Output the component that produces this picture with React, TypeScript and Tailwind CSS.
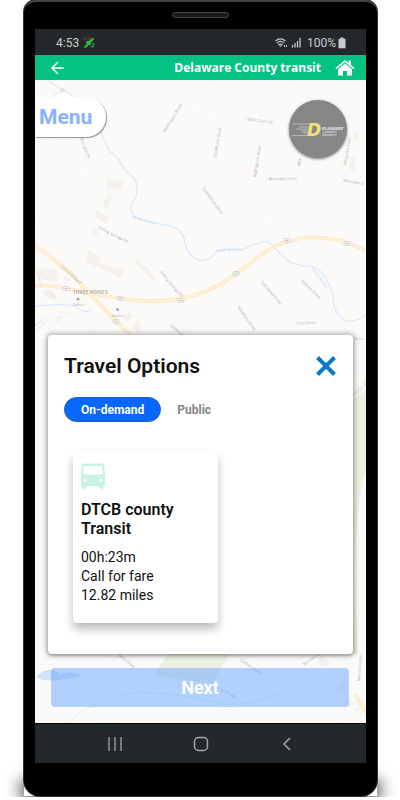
import { useState } from 'react';

const trips = [
  { id: 'dtcb', name: 'DTCB county Transit', duration: '00h:23m', fare: 'Call for fare', distance: '12.82 miles' },
];

const tabs = ['On-demand', 'Public'];

const roads = [
  'M35 80 Q47 85 55 97 M35 140 Q60 133 82 138 L92 172 Q104 195 98 207 L88 224',
  'M126 80 L208 194 L222 213 Q230 220 260 219 Q282 222 288 240',
  'M137 93 L173 80 M182 80 L180 109 L200 112 L275 124 L290 127',
  'M226 80 L212 180 M268 80 L250 180 M311 80 L296 180 L287 238',
  'M344 80 L353 110 L340 180 L334 238 M353 110 L366 110',
  'M200 179 L366 181 M93 174 Q58 180 45 197 Q40 206 43 211',
  'M35 208 L89 224 L122 238 Q140 247 150 263 L180 294 M40 211 L35 230',
  'M318 237 L317 218 Q313 211 317 209 Q322 213 317 218',
  'M251 264 L260 279 L298 334 M260 279 Q274 270 300 281 Q318 290 318 303 L318 322 L333 334',
  'M223 285 L257 334 M157 305 Q165 320 190 336',
  'M35 329 Q60 306 84 318 L93 334 M52 334 L62 319 M93 328 L112 311',
  'M35 345 L48 357 M353 370 L366 361 M353 392 Q361 382 365 388 Q364 394 353 398',
  'M35 708 Q46 706 55 693 Q78 696 90 682 L120 657 L155 676 Q205 691 237 717',
  'M232 655 L251 675 Q271 687 276 678 L292 655 M328 655 L352 690 L357 724',
  'M366 655 L355 700 M94 724 Q100 714 112 724 M337 724 L366 708',
];

const buildings = [
  '107,181 122,182 121,189 107,188',
  '108,195 112,197 107,208 103,206',
  '97,211 109,218 106,223 95,218',
  '93,230 98,231 97,235 93,234',
  '89,252 101,258 99,264 124,271 121,278 86,262',
  '138,260 155,277 154,281 136,263',
  '38,269 57,271 57,281 45,280 38,277',
  '65,277 70,279 69,281 63,280',
  '44,291 54,292 57,300 46,297',
  '56,320 60,311 64,314 59,325',
  '124,319 129,313 132,317 127,322',
  '133,327 137,322 142,326 137,332',
  '35,325 43,319 45,323 38,331',
  '354,132 358,134 357,142 353,140',
  '350,158 355,156 354,171 349,169',
  '320,657 330,663 326,667 318,663',
  '337,688 343,683 346,688 340,693',
  '345,702 350,698 354,704 349,708',
  '354,711 358,708 361,712 357,716',
];

const labels = [
  { text: 'Bennington Road', x: 165, y: 133, angle: -58 },
  { text: 'Belle Claire Dr.', x: 247, y: 121, angle: 7 },
  { text: 'Hazelhurst Road', x: 216, y: 159, angle: -80 },
  { text: 'Bellingham Road', x: 256, y: 178, angle: -81 },
  { text: 'Margrave Road', x: 346, y: 166, angle: -80 },
  { text: 'Albe', x: 300, y: 167, angle: -80 },
  { text: 'Avondale Drive', x: 269, y: 180, angle: 0 },
  { text: 'Avondale D', x: 343, y: 182, angle: 10 },
  { text: 'Summerset Drive', x: 202, y: 189, angle: 54 },
  { text: 'Bincaple Dr', x: 80, y: 139, angle: 68 },
  { text: 'Falling Springs Rd.', x: 98, y: 229, angle: 26 },
  { text: 'Falling Springs Rd.', x: 160, y: 273, angle: 50 },
  { text: 'Concord Road', x: 60, y: 267, angle: 42 },
  { text: 'Eastwood Drive', x: 261, y: 283, angle: 50 },
  { text: 'Keenan Drive', x: 301, y: 282, angle: 44 },
  { text: 'Westbury Drive', x: 237, y: 308, angle: 54 },
  { text: 'Cass Drive', x: 296, y: 325, angle: -2 },
  { text: 'Edna’s', x: 73, y: 306, angle: 0 },
  { text: 'Bush’s', x: 112, y: 317, angle: 0 },
  { text: 'Millwood', x: 170, y: 327, angle: 38 },
  { text: 'Drive', x: 354, y: 340, angle: 0 },
  { text: 'Bella Drive', x: 118, y: 656, angle: 40 },
  { text: 'Colleen Street', x: 240, y: 661, angle: 36 },
  { text: 'Bernard Ct', x: 304, y: 666, angle: -34 },
  { text: 'Bernard Street', x: 360, y: 682, angle: -86 },
  { text: 'Grant Street', x: 216, y: 688, angle: 30 },
];

const shields = [
  { x: 66, y: 289 },
  { x: 120, y: 299 },
  { x: 181, y: 301 },
  { x: 116, y: 322 },
  { x: 236, y: 274 },
  { x: 287, y: 241 },
  { x: 347, y: 244 },
];

function MapBackground() {
  return (
    <svg
      className="absolute inset-0 h-full w-full"
      viewBox="35 80 331 644"
      preserveAspectRatio="xMidYMid slice"
      aria-hidden="true"
    >
      <rect x="35" y="80" width="331" height="644" fill="#fbfaf9" />
      <path d="M168 654 H230 L212 684 L153 676 Z M366 378 L353 394 V655 H358 Q350 520 366 470 Z" fill="#eaf1e0" />
      <path d="M36 677 Q42 670 54 670 L60 675 Q70 670 82 676 Q64 681 48 681 Q40 681 36 677Z" fill="#cfe3f8" />
      {buildings.map((points) => (
        <polygon key={points} points={points} fill="#f5f2ee" stroke="#f0ece7" strokeWidth="0.5" />
      ))}
      <g fill="none" strokeLinecap="round" strokeLinejoin="round">
        {roads.map((d) => (
          <path key={d} d={d} stroke="#efeeed" strokeWidth="2.2" />
        ))}
        {roads.map((d) => (
          <path key={d} d={d} stroke="#fff" strokeWidth="1.4" />
        ))}
        <path d="M67 724 Q100 693 145 693 Q190 695 225 705 Q285 705 325 664" stroke="#e7e6e5" strokeWidth="0.8" />
        <path d="M37 271 L41 286 M50 293 L56 300 M50 299 L52 294" stroke="#dcd8d8" strokeWidth="0.8" strokeDasharray="2 1" />
        <g stroke="#d8e9fa" strokeWidth="1.2">
          <path d="M46 80 L62 90 L68 100 M98 127 Q105 144 111 153 Q119 158 123 168 L135 180 Q140 191 134 201 Q127 207 135 217 Q145 223 163 225 Q184 227 185 244 Q188 257 200 261 Q210 262 216 252 Q225 248 240 251 L262 242 Q271 241 277 251 L290 263 Q302 267 312 267 Q325 270 333 296 Q333 313 344 321 Q355 324 366 315" />
          <path d="M35 307 Q60 303 77 307 Q82 314 90 311" />
        </g>
        <g stroke="#f7e5c0" strokeWidth="3.6">
          <path d="M35 246 L69 272 L98 303 L130 336" />
          <path d="M35 286 Q60 286 79 292 L120 299 Q165 306 200 294 Q225 285 250 264 Q275 242 305 238 Q337 236 366 251" />
          <path d="M356 697 L366 713" />
        </g>
        <g stroke="#fff1d3" strokeWidth="2.4">
          <path d="M35 246 L69 272 L98 303 L130 336" />
          <path d="M35 286 Q60 286 79 292 L120 299 Q165 306 200 294 Q225 285 250 264 Q275 242 305 238 Q337 236 366 251" />
          <path d="M356 697 L366 713" />
        </g>
      </g>
      {shields.map((s) => (
        <g key={`${s.x}-${s.y}`}>
          <rect x={s.x - 3} y={s.y - 2} width="6" height="4" rx="1.5" fill="#f6f5f4" stroke="#c9c6c4" strokeWidth="0.7" />
          <path d={`M${s.x - 1} ${s.y} h2`} stroke="#b5b2b0" strokeWidth="1" />
        </g>
      ))}
      <circle cx="78" cy="299.5" r="1.5" fill="#aaa6a4" />
      <circle cx="117.5" cy="310" r="1.5" fill="#aaa6a4" />
      <circle cx="63" cy="104" r="12" fill="#fff" stroke="#dedddc" strokeWidth="0.8" />
      <path d="M61 91 L63 88 L65 91 Z" fill="none" stroke="#c8c8c8" strokeWidth="0.6" />
      <g className="font-['Open_Sans',sans-serif]" fill="#b3b0ae" fontSize="4">
        {labels.map((l) => (
          <text key={`${l.text}-${l.x}`} x={l.x} y={l.y} transform={`rotate(${l.angle} ${l.x} ${l.y})`}>
            {l.text}
          </text>
        ))}
        <g fill="#b9d8f5">
          <text x="216" y="253" transform="rotate(-5 216 253)">Smith Branch</text>
          <text x="132" y="219" transform="rotate(14 132 219)">Smith Branch</text>
          <text x="311" y="269" transform="rotate(54 311 269)">Smith Branch</text>
        </g>
        <text x="73" y="294" fill="#b3a3a3" fontSize="5" fontWeight="600">THREE POINTS</text>
      </g>
    </svg>
  );
}

function StatusBar() {
  return (
    <div className="flex h-[26px] items-center justify-between bg-[#23282b] pl-[21px] pr-5 text-xs text-[#c9cbcc]">
      <div className="flex items-center gap-1 pt-0.5">
        <span>4:53</span>
        <svg className="h-3 w-3" viewBox="0 0 12 12" aria-hidden="true">
          <path d="M0.500 0.800 H3 M4 0.800 H8 M1 2.600 H3 M4.500 2.600 H7" stroke="#8f3029" strokeWidth="1" />
          <path d="M0.500 10.500 L4 6.500 L2.500 4.500 L6 4 L8.500 1.500 L11.500 1 L9.500 4 L7.500 6 L8 8.500 L6 7.800 L3 10.800 Z" fill="#35c044" />
          <path d="M9 7 h2.500 M8.500 10 L11 9" stroke="#35a044" strokeWidth="1.500" fill="none" />
        </svg>
      </div>
      <div className="flex items-center pt-0.5">
        <svg className="h-3 w-[26px]" viewBox="0 0 26 12" fill="none" aria-hidden="true">
          <g stroke="#c9cbcc" strokeWidth="1.2">
            <path d="M0.600 4 Q5.500 -0.400 10.400 4" />
            <path d="M2 6 Q5.500 2.800 9 6" />
            <path d="M3.500 8 Q5.500 6.200 7.500 8" />
          </g>
          <path d="M4 8.400 H7 L5.500 10 Z M9 8 h1 v2 h-1z M11 8 h1 v2 h-1z" fill="#c9cbcc" />
          <path d="M17.500 8 v2.500 M20 6 v4.500 M22.500 4 v6.500 M25 1 v9.500" stroke="#c9cbcc" strokeWidth="1.300" />
        </svg>
        <span className="ml-1.5">100%</span>
        <svg className="ml-0.5 h-3 w-2" viewBox="0 0 8 12" aria-hidden="true">
          <path d="M2.500 0.500 h3 v1.200 h1.500 q0.500 0 0.500 0.500 v8.600 q0 0.500 -0.500 0.500 h-6 q-0.500 0 -0.500 -0.500 v-8.600 q0 -0.500 0.500 -0.500 h1.500z" fill="#c9cbcc" />
        </svg>
      </div>
    </div>
  );
}

function Header() {
  return (
    <header className="flex h-[25px] items-center bg-[#04c184] pl-4 pr-[11px] text-white">
      <button type="button" aria-label="Back">
        <svg className="h-3.5 w-3.5" viewBox="0 0 14 14" fill="none" stroke="currentColor" strokeWidth="1.500" aria-hidden="true">
          <path d="M7 1 L1 7 L7 13 M1 7 H13" />
        </svg>
      </button>
      <h1 className="ml-auto font-['Open_Sans',sans-serif] text-xs leading-5 font-bold">Delaware County transit</h1>
      <button type="button" aria-label="Home" className="ml-3.5">
        <svg className="h-4 w-5" viewBox="0 0 20 16" fill="currentColor" aria-hidden="true">
          <path d="M0.400 8 L10 0 L13.500 3 V0.500 H16 V5 L19.600 8 L18.600 9.200 L10 2 L1.400 9.200 Z" />
          <path d="M10 3.300 L17 9.200 V15.600 H12 V11 H8 V15.600 H3 V9.200 Z" />
        </svg>
      </button>
    </header>
  );
}

function AgencyLogo() {
  return (
    <svg className="h-[58px] w-[58px] rounded-full bg-[#868686] shadow-[0_1px_3px_#0008]" viewBox="0 0 58 58" role="img" aria-label="Delaware County Transit">
      <path d="M4 24 H20 M10 27 H20 M7 29 H19 M12 31 H19 M14 33 H19 M3 35.500 H19" stroke="#c4c4c4" strokeWidth="0.800" />
      <g className="font-['DejaVu_Sans',sans-serif]" fontStyle="italic" fontWeight="700">
        <text x="18" y="36" fontSize="17" fill="#f2e377">D</text>
        <text x="33" y="30" fontSize="4" fill="#e2e2e2">ELAWARE</text>
        <text x="34" y="33" fontSize="3" fill="#cfcfcf">COUNTY</text>
        <text x="33" y="36" fontSize="3" fill="#cfcfcf">TRANSIT</text>
      </g>
    </svg>
  );
}

function BusIcon() {
  return (
    <svg className="h-[27px] w-6" viewBox="0 0 24 27" aria-hidden="true">
      <path
        fill="#c8f2e4"
        fillRule="evenodd"
        d="M2 0.500 H22 Q23 0.500 23 1.500 L24 12 V23 H22.500 V25 Q22 26.500 20.500 26.500 Q19 26.500 18.500 25 V23 H5.500 V25 Q5 26.500 3.500 26.500 Q2 26.500 1.500 25 V23 H0 V12 L1 1.500 Q1 0.500 2 0.500 Z M3.500 3 Q3 3 2.900 3.500 L2.200 11 Q2.200 11.500 3 11.500 H21 Q21.800 11.500 21.800 11 L21.100 3.500 Q21 3 20.500 3 Z M4 15.700 a1.600 1.600 0 1 0 0.010 0 Z M20 15.700 a1.600 1.600 0 1 0 0.010 0 Z"
      />
    </svg>
  );
}

function TravelOptions() {
  const [tab, setTab] = useState('On-demand');

  return (
    <section className="mx-[13px] rounded bg-white pt-[17px] pr-[17px] pb-[31px] pl-4 text-[#111] shadow-[0_0_5px_2px_#0004,0_2px_3px_#0003]">
      <div className="flex items-center justify-between">
        <h2 className="text-[21px] leading-7 font-semibold">Travel Options</h2>
        <button type="button" aria-label="Close">
          <svg className="h-5 w-5" viewBox="0 0 20 20" stroke="#0b79c4" strokeWidth="4" aria-hidden="true">
            <path d="M1.500 1.500 L18.500 18.500 M18.500 1.500 L1.500 18.500" />
          </svg>
        </button>
      </div>

      <div className="mt-[17px] flex">
        {tabs.map((name) => (
          <button
            key={name}
            type="button"
            onClick={() => setTab(name)}
            className={
              tab === name
                ? 'h-[25px] rounded-full border border-[#1c5cc0] bg-[#0767ff] px-4 text-xs font-bold text-white'
                : 'h-[25px] px-4 text-xs font-bold text-[#858585]'
            }
          >
            {name}
          </button>
        ))}
      </div>

      <div className="mt-[30px] flex px-[9px]">
        {trips.map((trip) => (
          <article key={trip.id} className="w-[145px] rounded-sm bg-white px-2 pt-[11px] pb-[18px] shadow-[0_6px_10px_#0004]">
            <BusIcon />
            <h3 className="mt-2.5 text-base leading-[19px] font-semibold">{trip.name}</h3>
            <div className="mt-2.5 text-sm leading-[19px]">
              <p>{trip.duration}</p>
              <p>{trip.fare}</p>
              <p>{trip.distance}</p>
            </div>
          </article>
        ))}
      </div>
    </section>
  );
}

function NavBar() {
  return (
    <nav className="flex h-10 items-center justify-center gap-[70px] border-t border-black bg-[#23282b] text-[#a4a7a8]">
      <button type="button" aria-label="Recent apps">
        <svg className="h-4 w-4" viewBox="0 0 16 16" stroke="currentColor" strokeWidth="1.300" aria-hidden="true">
          <path d="M2 1 V15 M8 1 V15 M14 1 V15" />
        </svg>
      </button>
      <button type="button" aria-label="Home screen">
        <svg className="h-4 w-4" viewBox="0 0 16 16" fill="none" stroke="currentColor" strokeWidth="1.500" aria-hidden="true">
          <rect x="1.500" y="1.500" width="13" height="13" rx="4" />
        </svg>
      </button>
      <button type="button" aria-label="Go back">
        <svg className="h-4 w-4" viewBox="0 0 16 16" fill="none" stroke="currentColor" strokeWidth="1.500" aria-hidden="true">
          <path d="M11 2 L5 8 L11 14" />
        </svg>
      </button>
    </nav>
  );
}

export default function App() {
  return (
    <div className="flex min-h-screen items-start bg-white pr-[23px] pl-6 font-[Roboto,sans-serif]">
      <div className="relative flex-1">
        {/* ground shadow, cut flat at the bottom edge */}
        <div className="absolute right-0 bottom-0 left-0 h-3 shadow-[0_0_16px_3px_#000c] [clip-path:inset(-30px_-24px_-1px_-24px)]" />
        <div className="relative rounded-t-xl rounded-b-2xl border-t-2 border-[#444] bg-black px-[11px] pb-[33px] shadow-[0_0_0_1px_#333]">
          <div className="flex h-[27px] items-start justify-center pt-2.5">
            <div className="h-1.5 w-[57px] rounded-full border border-[#444] bg-[#191919]" />
          </div>
          <StatusBar />
          <Header />
          <main className="relative overflow-hidden">
            <MapBackground />
            <div className="relative pb-4">
              <div className="flex items-start justify-between pt-[17px] pr-[19px]">
                <button
                  type="button"
                  className="h-10 rounded-r-full bg-white pr-3.5 pl-1 pt-0.5 text-[21px] font-bold text-[#8ab1ff] shadow-[1px_1px_1px_#0006]"
                >
                  Menu
                </button>
                <div className="pt-[3px]">
                  <AgencyLogo />
                </div>
              </div>
              <div className="mt-[177px]">
                <TravelOptions />
              </div>
              <div className="mt-3.5 pr-[17px] pl-4">
                <button type="button" className="h-[39px] w-full rounded-sm bg-[#6aa5ff]/50 text-lg font-semibold text-white">
                  Next
                </button>
              </div>
            </div>
          </main>
          <NavBar />
        </div>
      </div>
    </div>
  );
}
